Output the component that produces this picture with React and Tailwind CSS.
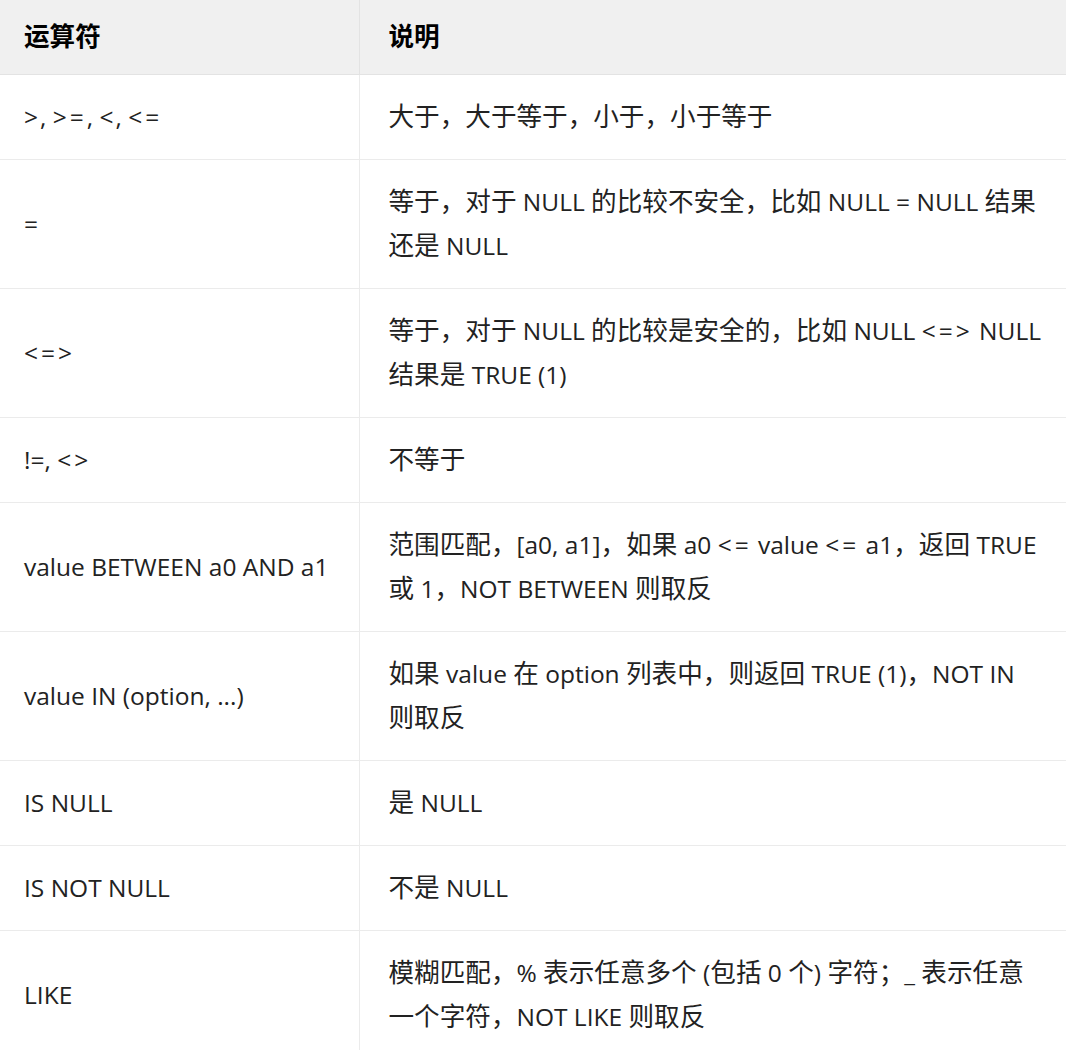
import React from 'react';

const rows = [
  { op: '>, >=, <, <=', desc: ['大于，大于等于，小于，小于等于'] },
  { op: '=', desc: ['等于，对于 NULL 的比较不安全，比如 NULL = NULL 结果', '还是 NULL'] },
  { op: '<=>', desc: ['等于，对于 NULL 的比较是安全的，比如 NULL <=> NULL', '结果是 TRUE (1)'] },
  { op: '!=, <>', desc: ['不等于'] },
  { op: 'value BETWEEN a0 AND a1', desc: ['范围匹配，[a0, a1]，如果 a0 <= value <= a1，返回 TRUE', '或 1，NOT BETWEEN 则取反'] },
  { op: 'value IN (option, ...)', desc: ['如果 value 在 option 列表中，则返回 TRUE (1)，NOT IN', '则取反'] },
  { op: 'IS NULL', desc: ['是 NULL'] },
  { op: 'IS NOT NULL', desc: ['不是 NULL'] },
  { op: 'LIKE', desc: ['模糊匹配，% 表示任意多个 (包括 0 个) 字符；_ 表示任意', '一个字符，NOT LIKE 则取反'] },
];

// comparison signs sit wider apart in the original font
const Latin = ({ text }) => {
  const parts = text.split(/(<=>|<>|[<>]=?)/);
  return parts.map((p, i) =>
    i % 2 === 1 ? (
      <span key={i} className={p.length > 1 ? 'tracking-[3px]' : 'tracking-[2px]'}>{p}</span>
    ) : (
      <span key={i}>{p}</span>
    )
  );
};

// chinese glyphs render a bit larger than latin in the original
const Mixed = ({ text }) => {
  const parts = text.split(/([\u3000-\u303f\u4e00-\u9fff\uff00-\uffef]+)/);
  return parts.map((p, i) =>
    i % 2 === 1 ? (
      <span key={i} className="text-[25.6px]">{p}</span>
    ) : (
      <Latin key={i} text={p} />
    )
  );
};

const App = () => {
  return (
    <div
      className="w-[1066px] min-h-[1050px] bg-white text-[#222] text-[24.5px] leading-[44px]"
      style={{ fontFamily: '"Open Sans", "Noto Sans CJK SC", sans-serif' }}
    >
      <table className="w-full border-collapse table-fixed">
        <colgroup>
          <col className="w-[359px]" />
          <col />
        </colgroup>
        <thead>
          <tr className="bg-[#f0f0f0] border-b border-[#e3e3e3]">
            <th className="text-left font-bold text-black pl-6 py-[15px] border-r border-[#e3e3e3]">
              <Mixed text="运算符" />
            </th>
            <th className="text-left font-bold text-black pl-[29px] py-[15px]">
              <Mixed text="说明" />
            </th>
          </tr>
        </thead>
        <tbody>
          {rows.map((r, idx) => (
            <tr key={idx} className="border-b border-[#ebebeb]">
              <td className="pl-6 py-5 align-middle border-r border-[#ebebeb] whitespace-nowrap">
                <Latin text={r.op} />
              </td>
              <td className="pl-[29px] pr-2 py-5 align-middle whitespace-nowrap">
                {r.desc.map((line, i) => (
                  <div key={i} className="h-[44px]">
                    <Mixed text={line} />
                  </div>
                ))}
              </td>
            </tr>
          ))}
        </tbody>
      </table>
    </div>
  );
};

export default App;
